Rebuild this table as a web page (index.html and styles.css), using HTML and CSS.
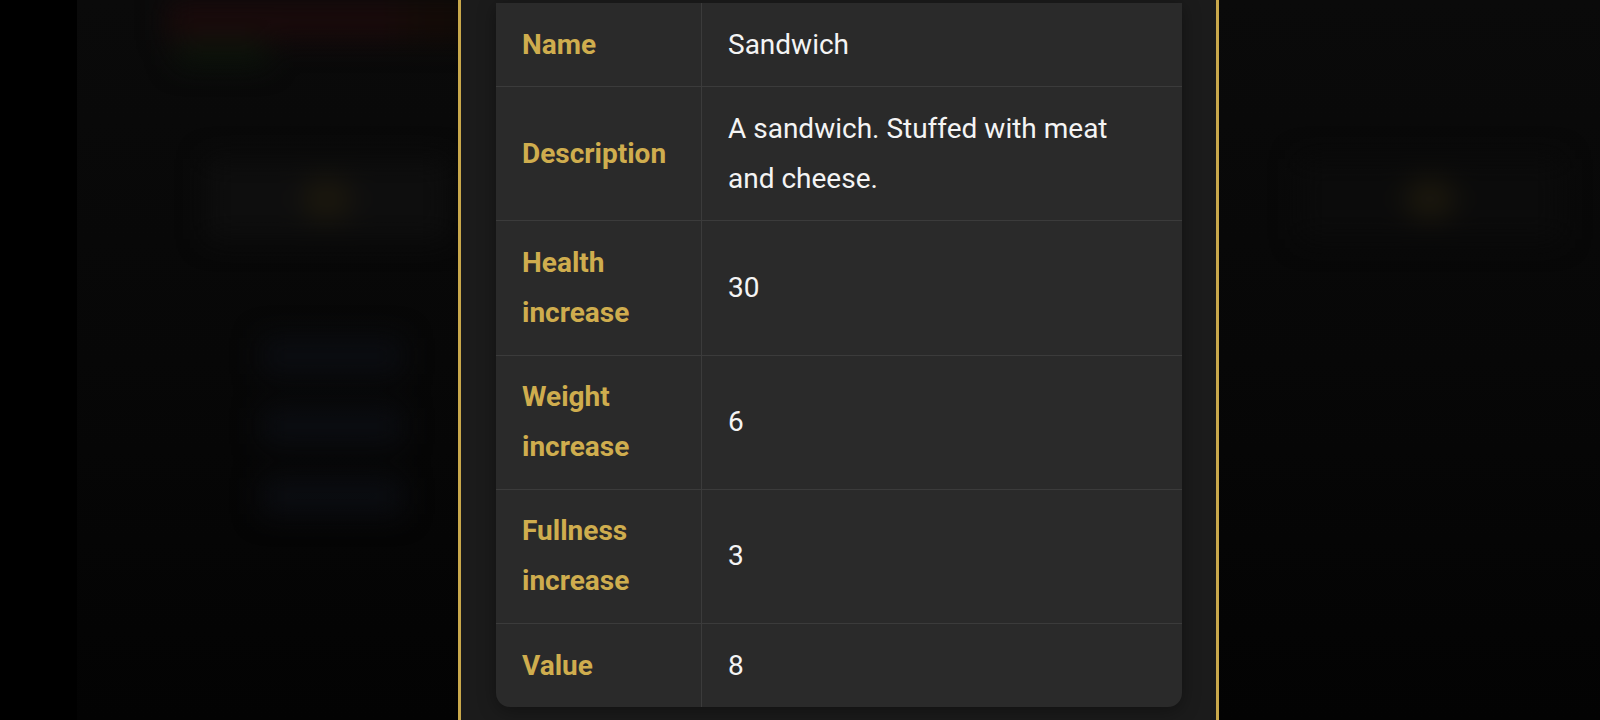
FILE: index.html
```html
<!DOCTYPE html>
<html lang="en">
<head>
<meta charset="utf-8">
<title>Sandwich</title>
<link rel="stylesheet" href="styles.css">
</head>
<body>
<div class="app">
  <aside class="sidebar"></aside>
  <main class="main">
    <div class="bg">
      <div class="bg-header">
        <div class="bg-red"></div>
        <div class="bg-amber"></div>
      </div>
      <div class="bg-green"></div>
      <div class="bg-body">
        <div class="bg-col">
          <div class="bg-card"><div class="bg-glow"></div></div>
          <div class="bg-row"></div>
          <div class="bg-row"></div>
          <div class="bg-row"></div>
        </div>
        <div class="bg-col bg-col-right">
          <div class="bg-card bg-card-right"><div class="bg-glow"></div></div>
        </div>
      </div>
    </div>
    <div class="overlay">
      <section class="modal">
        <div class="info">
          <div class="cell label">Name</div>
          <div class="cell value">Sandwich</div>
          <div class="cell label">Description</div>
          <div class="cell value">A sandwich. Stuffed with meat and cheese.</div>
          <div class="cell label">Health increase</div>
          <div class="cell value">30</div>
          <div class="cell label">Weight increase</div>
          <div class="cell value">6</div>
          <div class="cell label">Fullness increase</div>
          <div class="cell value">3</div>
          <div class="cell label last">Value</div>
          <div class="cell value last">8</div>
        </div>
      </section>
    </div>
  </main>
</div>
</body>
</html>
```
FILE: styles.css
```css
* { box-sizing: border-box; }

html, body {
  margin: 0;
  padding: 0;
  height: 100%;
  background: #000;
  font-family: Roboto, "Liberation Sans", sans-serif;
  overflow: hidden;
}

.app {
  display: flex;
  height: 720px;
}

.sidebar {
  width: 77px;
  flex: none;
  background: #000;
}

.main {
  flex: 1;
  position: relative;
  overflow: hidden;
  background: linear-gradient(to bottom, #0a0a0a 0%, #070707 50%, #030303 100%);
}

/* blurred page content behind the modal */
.bg {
  height: 100%;
  filter: blur(14px);
}

.bg-header {
  display: flex;
  height: 40px;
  padding-left: 90px;
}

.bg-red {
  width: 230px;
  background: #1a0a0b;
}

.bg-amber {
  width: 160px;
  background: linear-gradient(to right, #180c08, #0c0905);
}

.bg-green {
  width: 90px;
  height: 24px;
  margin-left: 100px;
  background: #0b150a;
}

.bg-body {
  display: flex;
  justify-content: space-between;
  padding: 95px 40px 0 130px;
}

.bg-col {
  display: flex;
  flex-direction: column;
  gap: 34px;
  width: 240px;
}

.bg-card {
  height: 80px;
  background: #0e0e0e;
  display: flex;
  justify-content: center;
  align-items: center;
  margin-bottom: 65px;
}

.bg-glow {
  width: 50px;
  height: 40px;
  border-radius: 50%;
  background: #1c180d;
}

.bg-row {
  height: 36px;
  margin-left: 55px;
  width: 140px;
  background: #0b0d12;
}

.bg-col-right {
  width: 260px;
}

.bg-card-right {
  background: #0b0b0b;
}

/* overlay + modal */
.overlay {
  position: absolute;
  inset: 0;
  display: flex;
  justify-content: center;
}

.modal {
  width: 761px;
  height: 100%;
  background: #1b1b1b;
  border-left: 3px solid #c9a84b;
  border-right: 3px solid #c9a84b;
  padding: 3px 34px 0 35px;
}

.info {
  display: grid;
  grid-template-columns: 206px 1fr;
  background: #2a2a2a;
  border-radius: 0 0 14px 14px;
  overflow: hidden;
  box-shadow: 0 4px 18px rgba(0, 0, 0, 0.35);
}

.cell {
  display: flex;
  align-items: center;
  padding: 16.6px 30px 16.6px 26px;
  font-size: 28px;
  line-height: 50px;
  border-bottom: 1px solid #3b3b3b;
}

.cell.last {
  border-bottom: none;
}

.label {
  color: #cfad4e;
  font-weight: 700;
  border-right: 1px solid #3b3b3b;
}

.value {
  color: #f4f4f4;
  font-weight: 400;
}
```
